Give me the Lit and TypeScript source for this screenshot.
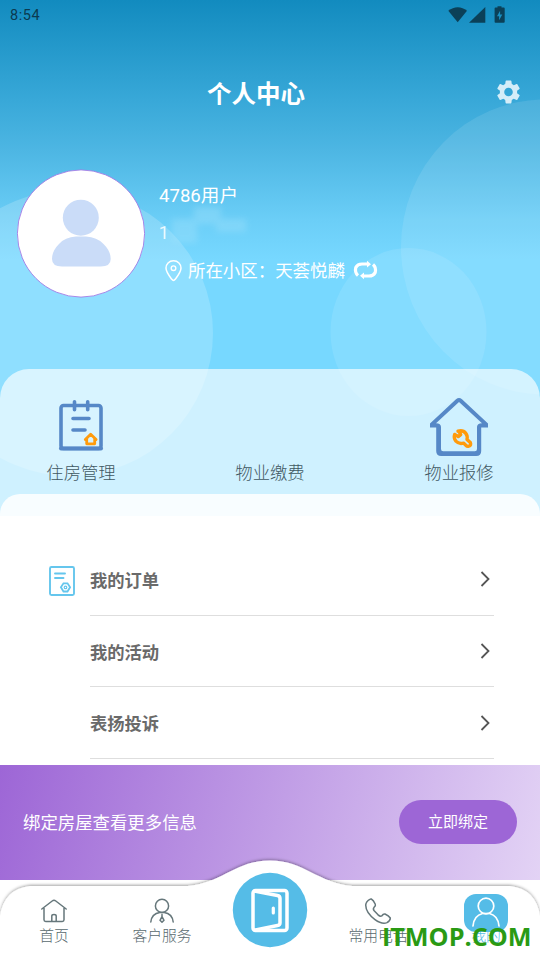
import { LitElement, html, css, svg } from "lit";
import { customElement } from "lit/decorators.js";

const statusIcons = svg`
  <path fill="#0b4058" d="M0.300 3.800C6-1 13.500-1 19 3.800L9.700 15.200Z"/>
  <path fill="#0b4058" d="M37.300 0V15.700H21Z"/>
  <path fill="#0b4058" fill-rule="evenodd" d="M49.500 -.8h4v1.400h2.300q.9 0 .9 1v13.200q0 1-.9 1h-8.300q-.9 0-.9-1V1.600q0-1 .9-1h2ZM52.100 3.700L49 9.300h2.100v4l3.200-5.800h-2.200Z"/>`;

const noteIcon = svg`
  <rect x="2" y="5.500" width="40" height="43" rx="2.500" fill="none" stroke="#5688c7" stroke-width="3.600"/>
  <path d="M2 48.500h40" stroke="#5688c7" stroke-width="4" stroke-linecap="round"/>
  <path d="M15.500 1.700v8M28.700 1.700v8M14 18.500h16M14 30h12" stroke="#5688c7" stroke-width="3.600" stroke-linecap="round" fill="none"/>
  <path d="M26.300 39.500L31.700 34.200l5.400 5.300M27.700 38.500V43.800h8V38.500" stroke="#ff9b0c" stroke-width="2.800" stroke-linecap="round" stroke-linejoin="round" fill="none"/>`;

const repairIcon = svg`
  <path d="M0 25.500V29.500H6.200V53q0 5 5 5h35q5 0 5-5V29.500H58v-4L32 1.300q-3-2.600-6 0ZM6 25.300L29 4 52 25.300q-5 .3-5 3.700V51q0 2.200-2.200 2.200H13.200Q11 53.200 11 51V29q0-3.400-5-3.700Z" fill="#5688c7" fill-rule="evenodd"/>
  <path d="M28 33.200q5-1.500 7.800 2.200 2 2.600 1.200 6l3.300 3.100q1.200 3-1.500 3.700-1.600.5-2.700-.7l-2.600-2.400q-4.700 1.200-7.600-1.900-2.500-3-1.200-6.800l3.500 2.200 2.500-2-1.900-3.400Z" fill="none" stroke="#ff9b0c" stroke-width="3.400" stroke-linejoin="round"/>`;

const nav = {
  home: svg`<g fill="none" stroke="#66777b" stroke-width="1.500" stroke-linecap="round" stroke-linejoin="round">
    <path d="M1.800 12L12.200 4q1.800-1.300 3.600 0L26.200 12M4 11V22.800q0 1.700 1.700 1.700H22.300q1.700 0 1.700-1.700V11M11.800 24.300v-5.300q0-1.500 2.200-1.500t2.200 1.500V24.300"/></g>`,
  service: svg`<g fill="none" stroke="#66777b" stroke-width="1.500" stroke-linecap="round" stroke-linejoin="round">
    <circle cx="14" cy="8.900" r="6.600"/><path d="M2.800 25q1-8.500 9-9.500h4.400q8 1 9 9.500M14 17.500v2M14 19.500l-2 3.800 2 2 2-2Z"/></g>`,
  phone: svg`<g fill="none" stroke="#66777b" stroke-width="1.500" stroke-linejoin="round">
    <path transform="translate(0 .8)" d="M5.800 1.500Q2 3.500 1.700 7.300 1.800 15 11 21.800q7 5 12 3 3.500-2 3.300-4.600-1.500-2.300-5.300-4-1.700-.4-3.300 2-1.400 1-3.900-1.400l-3.600-3.800q-1.500-2-.2-3.400 2-1.600 1.300-3.200Q9.500 2.200 7.300 1.200 6.500 1 5.800 1.500Z"/></g>`,
};

@customElement("app-root")
export class AppRoot extends LitElement {
  static styles = css`
    :host {
      display: block;
      position: relative;
      width: 540px;
      height: 960px;
      overflow: hidden;
      background: #fff;
      font-family: Roboto, "Noto Sans CJK SC", sans-serif;
      color: #fff;
    }
    svg { display: block; flex: none; overflow: visible; }
    .hero {
      position: relative;
      height: 515.500px;
      display: flex;
      flex-direction: column;
      background: linear-gradient(#128bbf 0, #38a8d8 100px, #4db6e3 150px, #6bcef7 220px, #77d8ff 260px);
    }
    .bubbles { position: absolute; inset: 0; width: 540px; height: 515px; overflow: hidden; }
    .status {
      position: relative;
      height: 32px;
      display: flex;
      justify-content: space-between;
      padding: 0 35px 0 10px;
      font-size: 14.500px;
      line-height: 32px;
      letter-spacing: .6px;
      color: #0b3a50;
    }
    .status svg { margin-top: 7px; }
    .bar {
      position: relative;
      display: grid;
      grid-template-columns: 180px 152px 1fr;
      align-items: center;
      height: 122px;
      padding-right: 20px;
    }
    h1 {
      grid-column: 2;
      margin: 4px 0 0;
      text-align: center;
      font-size: 24.500px;
      font-weight: 700;
      line-height: 36px;
      white-space: nowrap;
    }
    .bar svg { justify-self: end; margin-bottom: 2px; }
    .profile {
      position: relative;
      display: flex;
      padding: 15px 17px 0;
      height: 200px;
    }
    .details { margin-left: 14px; }
    .name { font-size: 18.600px; line-height: 28px; margin-top: 13px; }
    .phone {
      height: 20px;
      margin-top: 13px;
      font-size: 18px;
      line-height: 20px;
      opacity: .85;
    }
    .smudge { position: absolute; left: 160px; top: 45px; opacity: .35; }
    .place {
      display: flex;
      align-items: center;
      margin: 13px 0 0 6px;
      height: 28px;
      font-size: 17.450px;
      white-space: nowrap;
    }
    .place span { margin: -2px 9px 0 6px; }
    .card {
      position: relative;
      box-sizing: border-box;
      height: 146.500px;
      border-radius: 29px 29px 0 0;
      background: rgba(255, 255, 255, .65);
      display: flex;
      flex-direction: column;
      justify-content: space-between;
    }
    .shortcuts { display: grid; grid-template-columns: 162px 216px 162px; height: 124.500px; }
    .shortcut {
      display: flex;
      flex-direction: column;
      align-items: center;
      font-size: 17.350px;
      line-height: 26px;
      font-weight: 300;
      color: #3f5862;
    }
    .pic { height: 61.500px; margin-top: 29px; display: flex; }
    .pic .note { margin-top: 2px; }
    .sheet { height: 22px; border-radius: 20px 20px 0 0; background: rgba(255, 255, 255, .85); }
    .list { padding: 28.500px 46px 0 48px; height: 220.500px; }
    .row {
      display: grid;
      grid-template-columns: 41.500px 1fr;
      height: 71.700px;
      color: #6a6a6a;
    }
    .row > svg { margin-top: 20.500px; }
    .entry {
      grid-column: 2;
      display: flex;
      justify-content: space-between;
      align-items: center;
      border-bottom: 1.300px solid #dedede;
      padding: 0 3px 0 .500px;
      font-size: 17.300px;
      font-weight: 700;
    }
    .banner {
      box-sizing: border-box;
      height: 115px;
      display: flex;
      justify-content: space-between;
      align-items: center;
      padding: 0 23px;
      font-size: 17.400px;
      background: linear-gradient(105deg, #9d66d6 0%, #e3d3f5 100%);
    }
    .banner span { margin-top: -1px; }
    .bind {
      width: 118px;
      height: 44px;
      border: 0;
      border-radius: 22px;
      background: #9d66d6;
      color: #fff;
      font: 15px/45px Roboto, "Noto Sans CJK SC", sans-serif;
      padding: 0;
      margin-top: -1px;
    }
    .tabs { position: absolute; left: 0; bottom: 0; width: 540px; height: 105px; }
    .shape { position: absolute; inset: 0; }
    .items { position: relative; display: grid; grid-template-columns: repeat(5, 108px); height: 105px; }
    .tab {
      display: flex;
      flex-direction: column;
      align-items: center;
      padding-top: 42px;
      font-size: 14.800px;
      line-height: 22px;
      font-weight: 300;
      color: #58696e;
    }
    .tab svg { margin-bottom: 1.500px; }
    .tab.door { padding-top: 17px; }
    .tab.mine { padding-top: 39.500px; color: #55bce7; }
    .tab.mine svg { margin-bottom: -6px; }
    .mark {
      position: absolute;
      right: 8.500px;
      bottom: 6px;
      font: 700 25.200px/36px "Open Sans", sans-serif;
      color: #2a9a14;
    }
  `;

  private shortcut(label: string, icon: unknown) {
    return html`<div class="shortcut"><div class="pic">${icon}</div>${label}</div>`;
  }

  private row(label: string, icon: unknown = "") {
    return html`<div class="row">${icon}
      <div class="entry">${label}
        <svg width="12" height="16" viewBox="0 0 12 16"><path d="M2.500 1L9.500 8L2.500 15" fill="none" stroke="#555" stroke-width="1.800"/></svg>
      </div></div>`;
  }

  private tab(label: string, icon: unknown) {
    return html`<div class="tab"><svg width="28" height="26" viewBox="0 0 28 26">${icon}</svg>${label}</div>`;
  }

  render() {
    return html`
      <section class="hero">
        <svg class="bubbles" viewBox="0 0 540 515">
          <g fill="#fff">
            <circle cx="70" cy="333" r="143" fill-opacity=".18"/>
            <ellipse cx="408.500" cy="332" rx="78" ry="84" fill-opacity=".1"/>
            <ellipse cx="545" cy="247" rx="144" ry="147.500" fill-opacity=".1"/>
          </g>
        </svg>
        <div class="status"><span>8:54</span><svg width="57" height="16" viewBox="0 0 57 16">${statusIcons}</svg></div>
        <header class="bar">
          <h1>个人中心</h1>
          <svg width="23" height="24" viewBox="2.400 2 19.200 20"><path fill="#d5edf8" d="M19.140 12.940c.04-.3.060-.61.060-.94 0-.32-.02-.64-.07-.94l2.030-1.580c.18-.14.230-.41.120-.61l-1.920-3.320c-.12-.22-.37-.29-.59-.22l-2.390.96c-.5-.38-1.030-.7-1.620-.94l-.36-2.540c-.04-.24-.24-.41-.48-.41h-3.840c-.24 0-.43.170-.47.410l-.36 2.540c-.59.240-1.130.570-1.620.940l-2.390-.96c-.22-.08-.47 0-.59.220L2.740 8.870c-.12.210-.08.470.120.610l2.030 1.580c-.05.300-.09.630-.09.940s.02.640.070.940l-2.030 1.580c-.18.140-.23.410-.12.610l1.920 3.320c.12.220.370.290.590.220l2.390-.96c.5.380 1.030.700 1.620.940l.36 2.540c.05.240.240.410.480.410h3.840c.24 0 .44-.17.470-.41l.36-2.540c.59-.24 1.130-.56 1.620-.94l2.390.96c.22.080.470 0 .59-.22l1.920-3.320c.12-.22.070-.47-.12-.61l-2.010-1.580zM12 15.600c-1.980 0-3.600-1.620-3.600-3.600s1.620-3.600 3.600-3.600 3.600 1.620 3.600 3.600-1.620 3.600-3.600 3.600z"/></svg>
        </header>
        <div class="profile">
          <svg width="128" height="129" viewBox="0 0 128 129">
            <circle cx="64" cy="64.500" r="63.600" fill="#fff" stroke="#a17ce5" stroke-width=".9"/>
            <circle cx="63.800" cy="48.700" r="18" fill="#cadcf8"/>
            <path d="M35 90Q35 82 42 75q6-7 17-7.500h10q11 .5 17.500 7.500Q93.700 82 93.700 90q0 7.500-10 7.500H45Q35 97.500 35 90Z" fill="#cadcf8"/>
          </svg>
          <svg class="smudge" width="95" height="50" viewBox="0 0 95 50"><defs><filter id="soft"><feGaussianBlur stdDeviation="3"/></filter></defs>
            <g fill="#a5e3fc" filter="url(#soft)"><rect x="12" y="20" width="25" height="24"/><rect x="34" y="8" width="27" height="17"/><rect x="56" y="20" width="30" height="13"/></g></svg>
          <div class="details">
            <div class="name">4786用户</div>
            <div class="phone">1</div>
            <div class="place">
              <svg width="17" height="22" viewBox="0 0 17 22"><path transform="translate(0 .8)" d="M8.500 1C4 1 1 4.200 1 8.300c0 4 3 7.600 5.800 11.200q1.700 2.200 3.400 0C13 15.900 16 12.300 16 8.300 16 4.200 13 1 8.500 1Z" fill="none" stroke="#fff" stroke-width="1.500"/><circle cx="8.500" cy="9.200" r="2.300" fill="none" stroke="#fff" stroke-width="1.400"/></svg>
              <span>所在小区：天荟悦麟</span>
              <svg width="23" height="20" viewBox="0 0 23 20"><g fill="none" stroke="#fff" stroke-width="3.200"><path d="M4 15.500Q.5 12.500 1.800 7.500 3.500 4 8 4h6"/><path d="M19 4.500q3.500 3 2.200 8-1.700 3.500-6.200 3.500H9"/></g><path d="M13 .8l4 3.400-4 3.400ZM10 19.200l-4-3.400 4-3.400Z" fill="#fff"/></svg>
            </div>
          </div>
        </div>
        <div class="card">
          <div class="shortcuts">
            ${this.shortcut("住房管理", html`<svg class="note" width="44" height="51" viewBox="0 0 44 51">${noteIcon}</svg>`)}
            ${this.shortcut("物业缴费", "")}
            ${this.shortcut("物业报修", html`<svg width="58" height="58" viewBox="0 0 58 58">${repairIcon}</svg>`)}
          </div>
          <div class="sheet"></div>
        </div>
      </section>
      <section class="list">
        ${this.row("我的订单", html`<svg width="28" height="32" viewBox="0 0 28 32"><g fill="none" stroke="#65c6ed" stroke-width="1.900" stroke-linecap="round">
          <rect x="2" y="2" width="24" height="28" rx="1.500"/><path d="M7 8.500h10M7 13h8.500"/><path d="M15.500 18.300h4l2.600 3.900-2.600 4.300h-4l-2.600-4.300Z" stroke-width="1.800"/><circle cx="17.500" cy="22.400" r="1.300" stroke-width="1.200"/></g></svg>`)}
        ${this.row("我的活动")}
        ${this.row("表扬投诉")}
      </section>
      <section class="banner"><span>绑定房屋查看更多信息</span><button class="bind">立即绑定</button></section>
      <nav class="tabs">
        <svg class="shape" width="540" height="105" viewBox="0 0 540 105">
          <defs><filter id="lift" x="-5%" y="-10%" width="110%" height="120%"><feDropShadow dx="0" dy="-1" stdDeviation="1.800" flood-color="#000" flood-opacity=".36"/></filter></defs>
          <path filter="url(#lift)" fill="#fff" d="M0 106V61Q4 34 30 31H188C222 28 236 5.500 270 5.500S318 28 352 31H510Q536 34 540 61V106Z"/>
        </svg>
        <div class="items">
          ${this.tab("首页", nav.home)}
          ${this.tab("客户服务", nav.service)}
          <div class="tab door"><svg width="76" height="76" viewBox="0 0 76 76"><circle cx="38" cy="38" r="37.200" fill="#55bce7"/>
            <g fill="none" stroke="#fff" stroke-width="3.500" stroke-linejoin="round"><rect x="21" y="18.500" width="34" height="40" rx="2.500"/><path d="M21.500 19L45.500 23.500q2.500.5 2.500 3V51q0 2-2.500 2.500L21.500 58.300"/></g><path d="M41.300 36v5" stroke="#fff" stroke-width="3.200" stroke-linecap="round"/></svg></div>
          ${this.tab("常用电话", nav.phone)}
          <div class="tab mine"><svg width="44" height="36" viewBox="0 0 44 36"><rect y="-1" width="44" height="38" rx="12" fill="#55bce7"/><g fill="none" stroke="#fff" stroke-width="1.700" stroke-linecap="round"><circle cx="22" cy="11" r="7.800"/><path d="M9 31q1-10.500 9.500-12.500h7Q34 20.500 35 31"/></g></svg>我的</div>
        </div>
      </nav>
      <div class="mark">ITMOP.COM</div>
    `;
  }
}
